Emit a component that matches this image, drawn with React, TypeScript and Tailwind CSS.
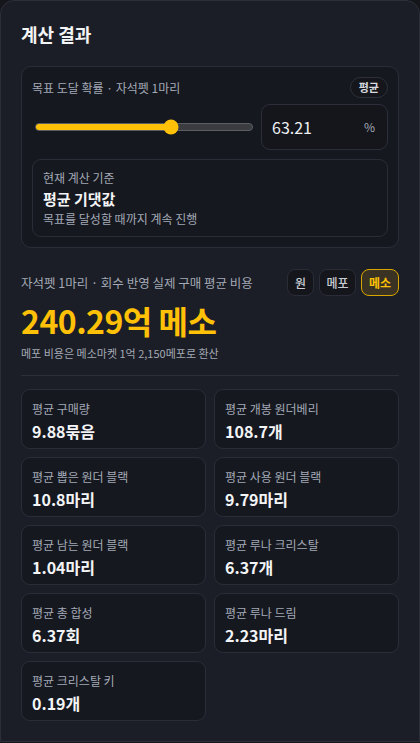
import React from "react";

const stats = [
  { label: "평균 구매량", value: "9.88묶음" },
  { label: "평균 개봉 원더베리", value: "108.7개" },
  { label: "평균 뽑은 원더 블랙", value: "10.8마리" },
  { label: "평균 사용 원더 블랙", value: "9.79마리" },
  { label: "평균 남는 원더 블랙", value: "1.04마리" },
  { label: "평균 루나 크리스탈", value: "6.37개" },
  { label: "평균 총 합성", value: "6.37회" },
  { label: "평균 루나 드림", value: "2.23마리" },
  { label: "평균 크리스탈 키", value: "0.19개" },
];

export default function App() {
  const probability = 63.21;

  return (
    <div
      className="min-h-[743px] bg-[#14161b]"
      style={{ fontFamily: "'Noto Sans CJK KR', 'Noto Sans', sans-serif" }}
    >
      <section className="rounded-t-[14px] border border-[#2c2f3a] bg-[#1b1e26] px-[20px] pt-[21px] pb-[20px]">
        {/* Title */}
        <h2 className="text-[18px] leading-[25px] font-bold text-[#f3f4f6]">계산 결과</h2>

        {/* Probability card */}
        <div className="mt-[19px] rounded-[10px] border border-[#2a2d38] bg-[#161820] p-[10px]">
          <div className="flex items-center justify-between">
            <span className="text-[12px] leading-[17px] text-[#a3a9b5]">목표 도달 확률 · 자석펫 1마리</span>
            <span className="rounded-full border border-[#2e313c] bg-[#14161c] px-[8px] text-[11px] leading-[19px] font-bold text-[#d6d9df]">
              평균
            </span>
          </div>

          <div className="mt-[6px] flex items-center gap-[8px]">
            <div className="flex-1 pl-[3px]">
              <div className="relative h-[8px] rounded-full border border-[#5b5d63] bg-[#3b3c40]">
                <div
                  className="h-full rounded-full bg-[#ffc107]"
                  style={{ width: `${probability - 0.5}%` }}
                />
                <div
                  className="absolute top-1/2 h-[15px] w-[15px] -translate-x-1/2 -translate-y-1/2 rounded-full bg-[#ffc107]"
                  style={{ left: `${probability - 0.5}%` }}
                />
              </div>
            </div>
            <div className="flex h-[46px] w-[127px] items-center justify-between rounded-[9px] border border-[#2c2f3a] bg-[#14161c] pl-[10px] pr-[12px]">
              <span className="text-[16px] text-[#eef0f3]">63.21</span>
              <span className="text-[12px] text-[#a3a9b5]">%</span>
            </div>
          </div>

          <div className="mt-[9px] rounded-[9px] border border-[#2a2d38] bg-[#161820] px-[10px] pt-[9px] pb-[9px]">
            <p className="text-[12px] leading-[17px] text-[#a3a9b5]">현재 계산 기준</p>
            <p className="mt-[3px] text-[15px] leading-[20px] font-bold text-[#f3f4f6]">평균 기댓값</p>
            <p className="mt-[1px] text-[12px] leading-[17px] text-[#a3a9b5]">목표를 달성할 때까지 계속 진행</p>
          </div>
        </div>

        {/* Cost */}
        <div className="mt-[21px] flex items-center justify-between">
          <span className="text-[12.5px] leading-[17px] text-[#a3a9b5]">자석펫 1마리 · 회수 반영 실제 구매 평균 비용</span>
          <div className="flex gap-[5px]">
            <button className="flex h-[27px] w-[27px] items-center justify-center rounded-[8px] border border-[#2a2d38] bg-[#14161c] text-[12px] font-medium text-[#c9cdd5]">
              원
            </button>
            <button className="flex h-[27px] w-[37px] items-center justify-center rounded-[8px] border border-[#2a2d38] bg-[#14161c] text-[12px] font-medium text-[#c9cdd5]">
              메포
            </button>
            <button className="flex h-[27px] w-[38px] items-center justify-center rounded-[8px] border border-[#d9a600] bg-[#3a3222] text-[12px] font-bold text-[#ffc107]">
              메소
            </button>
          </div>
        </div>

        <p className="mt-[4px] text-[32px] leading-[40px] font-bold tracking-[-0.5px] text-[#ffc107]">240.29억 메소</p>
        <p className="mt-[5px] text-[11px] leading-[17px] text-[#a3a9b5]">메포 비용은 메소마켓 1억 2,150메포로 환산</p>

        <div className="mt-[13px] h-px bg-[#2c2f3a]" />

        {/* Stats grid */}
        <div className="mt-[13px] grid grid-cols-2 gap-[8px]">
          {stats.map((s) => (
            <div
              key={s.label}
              className="rounded-[9px] border border-[#2a2d38] bg-[#161820] px-[10px] pt-[10px] pb-[5px]"
            >
              <p className="text-[12px] leading-[17px] text-[#a3a9b5]">{s.label}</p>
              <p className="mt-[2px] text-[16px] leading-[24px] font-bold text-[#f3f4f6]">{s.value}</p>
            </div>
          ))}
        </div>
      </section>
    </div>
  );
}
